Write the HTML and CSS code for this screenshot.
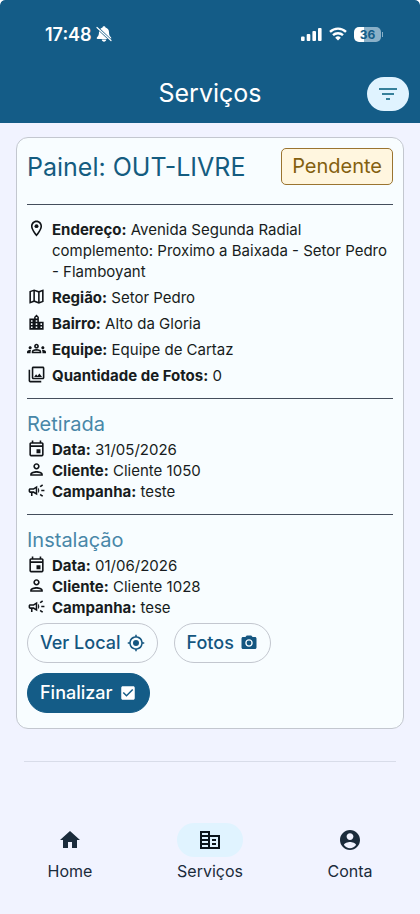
FILE: index.html
```html
<!DOCTYPE html>
<html lang="pt-BR">
<head>
<meta charset="utf-8">
<meta name="viewport" content="width=device-width, initial-scale=1">
<title>Serviços</title>
<link rel="stylesheet" href="styles.css">
</head>
<body>
<svg class="sprite" aria-hidden="true">
  <symbol id="place" viewBox="0 0 24 24"><path d="M12 2C8.13 2 5 5.13 5 9c0 5.25 7 13 7 13s7-7.75 7-13c0-3.87-3.13-7-7-7zM7 9c0-2.76 2.24-5 5-5s5 2.24 5 5c0 2.88-2.88 7.19-5 9.88C9.92 16.21 7 11.85 7 9z"/><circle cx="12" cy="9" r="2.5"/></symbol>
  <symbol id="map" viewBox="0 0 24 24"><path d="M20.5 3l-.16.03L15 5.1 9 3 3.36 4.9c-.21.07-.36.25-.36.48V20.5c0 .28.22.5.5.5l.16-.03L9 18.9l6 2.1 5.64-1.9c.21-.07.36-.25.36-.48V3.5c0-.28-.22-.5-.5-.5zM10 5.47l4 1.4v11.66l-4-1.4V5.47zm-5 .99l3-1.01v11.7l-3 1.16V6.46zm14 11.08l-3 1.01V6.86l3-1.16v11.84z"/></symbol>
  <symbol id="city" viewBox="0 0 24 24"><path d="M15 11V5l-3-3-3 3v2H3v14h18V11h-6zm-8 8H5v-2h2v2zm0-4H5v-2h2v2zm0-4H5V9h2v2zm6 8h-2v-2h2v2zm0-4h-2v-2h2v2zm0-4h-2V9h2v2zm0-4h-2V5h2v2zm6 12h-2v-2h2v2zm0-4h-2v-2h2v2z"/></symbol>
  <symbol id="groups" viewBox="0 0 24 24"><path d="M4 13c1.1 0 2-.9 2-2s-.9-2-2-2-2 .9-2 2 .9 2 2 2zm1.13 1.1C4.76 14.04 4.39 14 4 14c-.99 0-1.93.21-2.78.58C.48 14.9 0 15.62 0 16.43V18h4.5v-1.61c0-.83.23-1.61.63-2.29zM20 13c1.1 0 2-.9 2-2s-.9-2-2-2-2 .9-2 2 .9 2 2 2zm4 3.43c0-.81-.48-1.53-1.22-1.85-.85-.37-1.79-.58-2.78-.58-.39 0-.76.04-1.13.1.4.68.63 1.46.63 2.29V18H24v-1.57zM16.24 13.65c-1.17-.52-2.61-.9-4.24-.9-1.63 0-3.07.39-4.24.9C6.68 14.13 6 15.21 6 16.39V18h12v-1.61c0-1.18-.68-2.26-1.76-2.74zM8.07 16c.09-.23.13-.39.91-.69.97-.38 1.99-.56 3.02-.56s2.05.18 3.02.56c.77.3.81.46.91.69H8.07zM12 8c.55 0 1 .45 1 1s-.45 1-1 1-1-.45-1-1 .45-1 1-1m0-2c-1.66 0-3 1.34-3 3s1.34 3 3 3 3-1.34 3-3-1.34-3-3-3z"/></symbol>
  <symbol id="photos" viewBox="0 0 24 24"><path d="M20 4v12H8V4h12m0-2H8c-1.1 0-2 .9-2 2v12c0 1.1.9 2 2 2h12c1.1 0 2-.9 2-2V4c0-1.1-.9-2-2-2zm-8.5 9.67l1.69 2.26 2.48-3.1L19 15H9zM2 6v14c0 1.1.9 2 2 2h14v-2H4V6H2z"/></symbol>
  <symbol id="event" viewBox="0 0 24 24"><path d="M19 4h-1V2h-2v2H8V2H6v2H5c-1.11 0-2 .9-2 2v14c0 1.1.89 2 2 2h14c1.1 0 2-.9 2-2V6c0-1.1-.9-2-2-2zm0 16H5V10h14v10zm0-12H5V6h14v2zm-7 5h5v5h-5z"/></symbol>
  <symbol id="person" viewBox="0 0 24 24"><path d="M12 6c1.1 0 2 .9 2 2s-.9 2-2 2-2-.9-2-2 .9-2 2-2m0 10c2.7 0 5.8 1.29 6 2H6c.23-.72 3.31-2 6-2m0-12C9.79 4 8 5.79 8 8s1.79 4 4 4 4-1.79 4-4-1.79-4-4-4zm0 10c-2.67 0-8 1.34-8 4v2h16v-2c0-2.66-5.33-4-8-4z"/></symbol>
  <symbol id="campaign" viewBox="0 0 24 24"><path d="M18 11v2h4v-2h-4zM16 17.61c.96.71 2.21 1.65 3.2 2.39.4-.53.8-1.07 1.2-1.6-.99-.74-2.24-1.68-3.2-2.4-.4.54-.8 1.08-1.2 1.61zM20.4 5.6c-.4-.53-.8-1.07-1.2-1.6-.99.74-2.24 1.68-3.2 2.4.4.53.8 1.07 1.2 1.6.96-.72 2.21-1.65 3.2-2.4zM4 9c-1.1 0-2 .9-2 2v2c0 1.1.9 2 2 2h1v4h2v-4h1l5 3V6L8 9H4zm5.03 1.71L11 9.53v4.94l-1.97-1.18-.48-.29H4v-2h4.55l.48-.29zM15.5 12c0-1.33-.58-2.53-1.5-3.35v6.69c.92-.81 1.5-2.01 1.5-3.34z"/></symbol>
  <symbol id="target" viewBox="0 0 24 24"><circle cx="12" cy="12" r="4"/><path d="M20.94 11A8.99 8.99 0 0 0 13 3.06V1h-2v2.06A8.99 8.99 0 0 0 3.06 11H1v2h2.06A8.99 8.99 0 0 0 11 20.94V23h2v-2.06A8.99 8.99 0 0 0 20.94 13H23v-2h-2.06zM12 19c-3.87 0-7-3.13-7-7s3.13-7 7-7 7 3.13 7 7-3.13 7-7 7z"/></symbol>
  <symbol id="camera" viewBox="0 0 24 24"><path fill-rule="evenodd" d="M9 2L7.17 4H4c-1.1 0-2 .9-2 2v12c0 1.1.9 2 2 2h16c1.1 0 2-.9 2-2V6c0-1.1-.9-2-2-2h-3.17L15 2H9zm3 15c-2.76 0-5-2.24-5-5s2.24-5 5-5 5 2.24 5 5-2.24 5-5 5z"/><circle cx="12" cy="12" r="3.2"/></symbol>
  <symbol id="checkbox" viewBox="0 0 24 24"><path d="M19 3H5c-1.11 0-2 .9-2 2v14c0 1.1.89 2 2 2h14c1.11 0 2-.9 2-2V5c0-1.1-.89-2-2-2zm-9 14l-5-5 1.41-1.41L10 14.17l7.59-7.59L19 8l-9 9z"/></symbol>
  <symbol id="home" viewBox="0 0 24 24"><path d="M10 20v-6h4v6h5v-8h3L12 3 2 12h3v8z"/></symbol>
  <symbol id="business" viewBox="0 0 24 24"><path fill-rule="evenodd" d="M12 7V3H2v18h20V7H12zM4 5h6v2H4zM4 9h6v2H4zM4 13h6v2H4zM4 17h6v2H4zM12 9h8v10h-8zM14 11h4v2h-4zM14 15h4v2h-4z"/></symbol>
  <symbol id="account" viewBox="0 0 24 24"><path d="M12 2C6.48 2 2 6.48 2 12s4.48 10 10 10 10-4.48 10-10S17.52 2 12 2zm0 3.2c1.9 0 3.4 1.5 3.4 3.4S13.900 12 12 12s-3.400-1.500-3.400-3.400S10.100 5.200 12 5.200zm0 15c-2.500 0-4.710-1.280-6-3.220.03-1.990 4-3.080 6-3.080s5.970 1.090 6 3.080c-1.290 1.940-3.500 3.220-6 3.220z"/></symbol>
</svg>

<header class="top">
  <div class="status">
    <div class="status-group">
      <span class="clock">17:48</span>
      <svg class="bell" viewBox="0 0 16 16" aria-hidden="true">
        <path fill="#fff" d="M8 .3c.8 0 1.400.5 1.500 1.200 2.200.6 3.500 2.300 3.500 4.600 0 2.900.6 3.900 1.900 5.100.7.800.4 1.700-.5 1.700H1.600c-.9 0-1.200-.9-.5-1.700C2.400 10 3 9 3 6.100c0-2.300 1.300-4 3.500-4.600C6.600.8 7.200.3 8 .3zM5.700 13.600h4.600c-.2 1.300-1.100 2.100-2.300 2.100s-2.100-.8-2.300-2.100z"/>
        <path fill="none" stroke="#145c87" stroke-width="2.600" d="M.5 1l15 14"/>
        <path fill="none" stroke="#fff" stroke-width="1.200" stroke-linecap="round" d="M1 1.500l14 13"/>
      </svg>
    </div>
    <div class="status-group status-right">
      <svg class="signal" viewBox="0 0 21 14" aria-hidden="true"><rect x="0" y="9.500" width="3.600" height="4.500" rx="1"/><rect x="5.700" y="7" width="3.600" height="7" rx="1"/><rect x="11.400" y="4" width="3.600" height="10" rx="1"/><rect x="17" y="1" width="3.600" height="13" rx="1"/></svg>
      <svg class="wifi" viewBox="0 0 18 14" aria-hidden="true"><g fill="none" stroke="#fff" stroke-width="2.400"><path d="M1 4.900a11.500 11.500 0 0 1 16 0"/><path d="M4 8.200a7.200 7.200 0 0 1 10 0"/></g><path fill="#fff" d="M9 13.500L6.200 10.700a4 4 0 0 1 5.600 0z"/></svg>
      <div class="battery"><span class="level">36</span><i class="tip"></i></div>
    </div>
  </div>
  <div class="titlebar">
    <h1>Serviços</h1>
    <button class="filter" type="button" aria-label="Filtrar">
      <svg viewBox="0 0 20 14" aria-hidden="true"><path d="M1 2h18M4 7h12M8 12h4" stroke="#36809b" stroke-width="2"/></svg>
    </button>
  </div>
</header>

<main>
  <article class="card">
    <div class="card-head">
      <h2>Painel: OUT-LIVRE</h2>
      <span class="badge">Pendente</span>
    </div>
    <ul class="rows info">
      <li><svg><use href="#place"/></svg><p><b>Endereço:</b> Avenida Segunda Radial<br>complemento: Proximo a Baixada - Setor Pedro - Flamboyant</p></li>
      <li><svg><use href="#map"/></svg><p><b>Região:</b> Setor Pedro</p></li>
      <li><svg><use href="#city"/></svg><p><b>Bairro:</b> Alto da Gloria</p></li>
      <li><svg><use href="#groups"/></svg><p><b>Equipe:</b> Equipe de Cartaz</p></li>
      <li><svg><use href="#photos"/></svg><p><b>Quantidade de Fotos:</b> 0</p></li>
    </ul>
    <section class="step">
      <h3>Retirada</h3>
      <ul class="rows">
        <li><svg><use href="#event"/></svg><p><b>Data:</b> 31/05/2026</p></li>
        <li><svg><use href="#person"/></svg><p><b>Cliente:</b> Cliente 1050</p></li>
        <li><svg><use href="#campaign"/></svg><p><b>Campanha:</b> teste</p></li>
      </ul>
    </section>
    <section class="step">
      <h3>Instalação</h3>
      <ul class="rows">
        <li><svg><use href="#event"/></svg><p><b>Data:</b> 01/06/2026</p></li>
        <li><svg><use href="#person"/></svg><p><b>Cliente:</b> Cliente 1028</p></li>
        <li><svg><use href="#campaign"/></svg><p><b>Campanha:</b> tese</p></li>
      </ul>
    </section>
    <div class="actions">
      <button type="button">Ver Local <svg><use href="#target"/></svg></button>
      <button type="button">Fotos <svg><use href="#camera"/></svg></button>
      <button type="button" class="primary">Finalizar <svg><use href="#checkbox"/></svg></button>
    </div>
  </article>
  <hr>
</main>

<nav>
  <a href="#"><span class="pill"><svg><use href="#home"/></svg></span>Home</a>
  <a href="#" class="active" aria-current="page"><span class="pill"><svg><use href="#business"/></svg></span>Serviços</a>
  <a href="#"><span class="pill"><svg><use href="#account"/></svg></span>Conta</a>
</nav>
</body>
</html>
```
FILE: styles.css
```css
* { box-sizing: border-box; }

html { background: #fff; }

body {
  margin: 0;
  min-height: 100vh;
  display: flex;
  flex-direction: column;
  background: #f1f3ff;
  color: #171c20;
  font-family: Inter, Roboto, sans-serif;
  font-size: 15px;
  line-height: 21px;
  border-radius: 5px 5px 0 0;
}

h1, h2, h3, p, ul { margin: 0; padding: 0; font-weight: 400; }
svg { display: block; flex: none; fill: currentColor; }
.sprite { position: absolute; width: 0; height: 0; }

.top {
  background: #145c87;
  color: #fff;
  border-radius: 5px 5px 0 0;
  padding: 22px 0 12px;
}

.status {
  display: flex;
  justify-content: space-between;
  align-items: center;
  height: 24px;
  padding: 0 37px 0 45px;
}

.status-group { display: flex; align-items: center; gap: 4px; }
.status-right { gap: 7px; }
.clock { font-size: 18px; font-weight: 600; }
.bell { width: 16px; height: 16px; }
.signal { width: 21px; height: 14px; }
.wifi { width: 18px; height: 14px; }

.battery { display: flex; align-items: center; gap: 1px; }

.level {
  width: 27px;
  height: 15px;
  border-radius: 5px;
  background: linear-gradient(90deg, #fff 36%, #8ab0c8 36%);
  color: #145c87;
  font-size: 12px;
  font-weight: 700;
  line-height: 15px;
  text-align: center;
}

.tip { width: 1px; height: 5px; background: #8ab0c8; }

.titlebar {
  display: grid;
  grid-template-columns: 1fr auto 1fr;
  align-items: center;
  margin-top: 30px;
  padding: 0 11px;
}

h1 { grid-column: 2; font-size: 25px; line-height: 35px; }

.filter {
  justify-self: end;
  display: grid;
  place-items: center;
  width: 42px;
  height: 34px;
  padding: 0;
  border: 0;
  border-radius: 17px;
  background: #e0f3ff;
}

.filter svg { width: 20px; height: 14px; }

main { padding: 14px 16px 0; }

.card {
  border: 1px solid #c3c7cf;
  border-radius: 12px;
  background: #f8fdff;
  padding: 10px 10px 15px;
}

.card-head {
  display: flex;
  justify-content: space-between;
  align-items: center;
  padding-bottom: 19px;
}

h2 { color: #145c80; font-size: 25px; line-height: 36px; }

.badge {
  border: 1px solid #9a7430;
  border-radius: 5px;
  background: #fff6df;
  color: #83600f;
  font-size: 20px;
  line-height: 35px;
  padding: 0 10px;
}

.rows { list-style: none; }
.rows li { display: flex; gap: 6px; }
.rows svg { width: 19px; height: 19px; color: #101418; }
.rows b { font-weight: 700; }

.info {
  display: flex;
  flex-direction: column;
  gap: 5px;
  border-top: 1px solid #444e5c;
  padding: 14px 0 12px;
}

.step { border-top: 1px solid #444e5c; padding: 10px 0 12px; }
.step + .actions { margin-top: -7px; }

h3 { color: #4887a8; font-size: 20px; line-height: 30px; }

.actions { display: flex; flex-wrap: wrap; gap: 10px 16px; }

.actions button {
  display: flex;
  align-items: center;
  gap: 6px;
  height: 40px;
  padding: 0 12px;
  border: 1px solid #c3c7cf;
  border-radius: 20px;
  background: transparent;
  color: #145680;
  font: 500 18px/24px Inter, Roboto, sans-serif;
}

.actions svg { width: 18px; height: 18px; }
.actions .primary { border-color: #145c87; background: #145c87; color: #fff; }

hr { height: 1px; margin: 32px 8px 0; border: 0; background: #d8dce9; }

nav {
  display: grid;
  grid-template-columns: repeat(3, 1fr);
  margin-top: auto;
  padding-bottom: 32px;
}

nav a {
  display: flex;
  flex-direction: column;
  align-items: center;
  gap: 4px;
  color: #1b2b3b;
  font-size: 16px;
  text-decoration: none;
}

.pill {
  display: grid;
  place-items: center;
  width: 66px;
  height: 34px;
  border-radius: 17px;
}

.pill svg { width: 24px; height: 24px; }
.active .pill { background: #e0f3ff; color: #0c151c; }
```
